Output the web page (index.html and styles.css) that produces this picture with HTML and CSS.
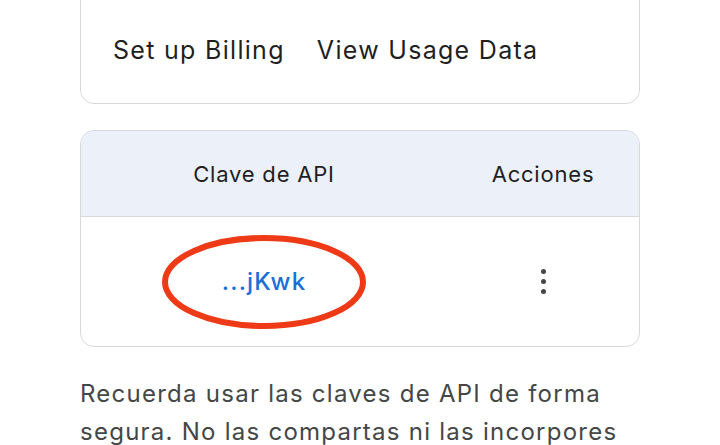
FILE: index.html
```html
<!DOCTYPE html>
<html lang="es">
<head>
<meta charset="utf-8">
<link rel="stylesheet" href="styles.css">
</head>
<body>
<main class="page">
  <section class="card card-actions">
    <div class="actions">
      <button class="text-btn">Set up Billing</button>
      <button class="text-btn">View Usage Data</button>
    </div>
  </section>

  <section class="card key-table">
    <div class="row head">
      <div class="cell">Clave de API</div>
      <div class="cell">Acciones</div>
    </div>
    <div class="row body">
      <div class="cell key-cell">
        <a class="key-link" href="#">...jKwk</a>
        <svg class="mark" width="212" height="100" viewBox="0 0 212 100" aria-hidden="true">
          <ellipse cx="106" cy="50" rx="99" ry="44" fill="none" stroke="#ee3a16" stroke-width="6"/>
        </svg>
      </div>
      <div class="cell">
        <button class="kebab" aria-label="Más acciones"><span></span><span></span><span></span></button>
      </div>
    </div>
  </section>

  <p class="note">Recuerda usar las claves de API de forma segura. No las compartas ni las incorpores en código público.</p>
</main>
</body>
</html>
```

FILE: styles.css
```css
* { box-sizing: border-box; }
html, body { margin: 0; padding: 0; background: #fff; }
body {
  width: 720px;
  height: 445px;
  overflow: hidden;
  font-family: "Inter", "Roboto", "Noto Sans", sans-serif;
  color: #1f1f1f;
}
.page { padding: 0 80px; }

.card {
  border: 1.5px solid #d6d8dc;
  border-radius: 14px;
  background: #fff;
}

.card-actions {
  margin-top: -30px;
  height: 134px;
  display: flex;
  align-items: flex-end;
  padding: 0 0 32px 18px;
}
.actions { display: flex; gap: 4px; }
.text-btn {
  font: inherit;
  font-size: 25px;
  letter-spacing: 1.3px;
  color: #1f1f1f;
  background: none;
  border: 0;
  padding: 6px 14px;
  line-height: 30px;
}

.key-table {
  margin-top: 26px;
  height: 217px;
  overflow: hidden;
  display: flex;
  flex-direction: column;
}
.row {
  display: grid;
  grid-template-columns: 366px 1fr;
}
.row .cell {
  display: flex;
  align-items: center;
  justify-content: center;
}
.head {
  height: 86px;
  background: #ebf0f9;
  border-bottom: 1.5px solid #d6d8dc;
  font-size: 22px;
  letter-spacing: 0.8px;
}
.body { flex: 1; }
.key-cell { position: relative; }
.key-link {
  color: #1b6fd8;
  text-decoration: none;
  font-size: 24px;
  font-weight: 500;
  letter-spacing: 1.2px;
}
.mark {
  position: absolute;
  left: 50%;
  top: 50%;
  transform: translate(-50%, -50%);
}
.kebab {
  border: 0;
  background: none;
  padding: 4px;
  display: flex;
  flex-direction: column;
  gap: 5px;
  align-items: center;
}
.kebab span {
  width: 5px;
  height: 5px;
  border-radius: 50%;
  background: #444746;
}

.note {
  margin: 28px 0 0;
  font-size: 24px;
  line-height: 38px;
  letter-spacing: 1.25px;
  color: #444746;
}
```
